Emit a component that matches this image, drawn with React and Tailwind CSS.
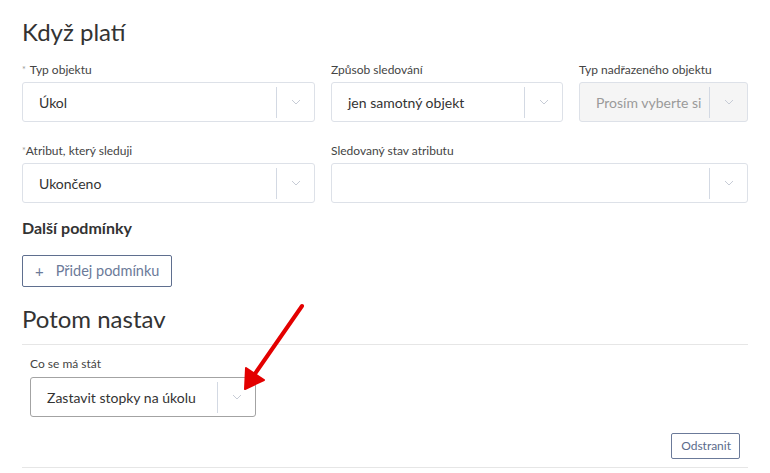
import React from "react";

function Chevron() {
  return (
    <svg width="10" height="6" viewBox="0 0 10 6" fill="none">
      <path d="M1 1l4 4 4-4" stroke="#c7ccd6" strokeWidth="1" />
    </svg>
  );
}

function Select({ value, placeholder, disabled, dark }) {
  return (
    <div
      className={`flex h-[40px] items-center rounded-[3px] border ${
        dark ? "border-[#a3a3a3]" : "border-[#dde1e8]"
      } ${disabled ? "bg-[#f5f5f5]" : "bg-white"}`}
    >
      <div className="min-w-0 flex-1 truncate pl-4 text-[14px] text-[#333]">
        {value ? value : <span className="text-[#9a9a9a]">{placeholder}</span>}
      </div>
      <div className="h-[31px] w-px bg-[#d3d9e3]" />
      <div className="grid w-[37px] place-items-center">
        <Chevron />
      </div>
    </div>
  );
}

function Field({ label, required, tight, width, gap = "mt-1", children }) {
  return (
    <div className={width}>
      <div className="h-4 text-[12px] leading-4 text-[#444]">
        {required && <span className={`text-[9px] text-[#999] align-top ${tight ? "" : "mr-1"}`}>*</span>}
        {label}
      </div>
      <div className={gap}>{children}</div>
    </div>
  );
}

export default function App() {
  return (
    <div className="relative h-[473px] w-[770px] overflow-hidden bg-white font-['Lato','Liberation_Sans',sans-serif]">
      <div className="w-[748px] pl-[22px]">
        <h2 className="mt-[17px] text-[24px] leading-[30px] text-[#333]">Když platí</h2>

        <div className="mt-[15px] flex gap-4">
          <Field label="Typ objektu" required width="w-[293px]">
            <Select value="Úkol" />
          </Field>
          <Field label="Způsob sledování" width="w-[232px]">
            <Select value="jen samotný objekt" />
          </Field>
          <Field label="Typ nadřazeného objektu" width="w-[169px]">
            <Select placeholder="Prosím vyberte si" disabled />
          </Field>
        </div>

        <div className="mt-[21px] flex gap-4">
          <Field label="Atribut, který sleduji" required tight width="w-[293px]">
            <Select value="Ukončeno" />
          </Field>
          <Field label="Sledovaný stav atributu" width="w-[417px]">
            <Select value="" />
          </Field>
        </div>

        <h3 className="mt-[15px] text-[16px] font-bold leading-[19px] text-[#333]">Další podmínky</h3>

        <button className="mt-[18px] flex h-[32px] w-[150px] items-center rounded-[2px] border border-[#5f6f8f] pl-3 text-[14.5px] text-[#6b7a99]">
          <span className="mr-[12px] text-[15px] leading-none">+</span>
          Přidej podmínku
        </button>

        <h2 className="mt-[17px] text-[24px] leading-[30px] text-[#333]">Potom nastav</h2>
        <div className="mt-[10px] border-t border-[#e6e6e6]" />

        <div className="mt-[11px] pl-2">
          <Field label="Co se má stát" width="w-[226px]" gap="mt-[5px]">
            <Select value="Zastavit stopky na úkolu" dark />
          </Field>
        </div>

        <div className="mt-[16px] flex justify-end pr-2">
          <button className="h-[26px] rounded-[2px] border border-[#6b7a99] pl-[9px] pr-[8px] text-[12px] text-[#5b6b8c]">
            Odstranit
          </button>
        </div>
        <div className="mt-[8px] border-t border-[#e6e6e6]" />
      </div>

      <svg className="pointer-events-none absolute left-0 top-0" width="770" height="473">
        <line x1="302" y1="306" x2="252" y2="378" stroke="#e30000" strokeWidth="4" strokeLinecap="round" />
        <path d="M245 389 L246 368 L264 380 Z" fill="#e30000" stroke="#e30000" strokeWidth="2" strokeLinejoin="round" />
      </svg>
    </div>
  );
}
